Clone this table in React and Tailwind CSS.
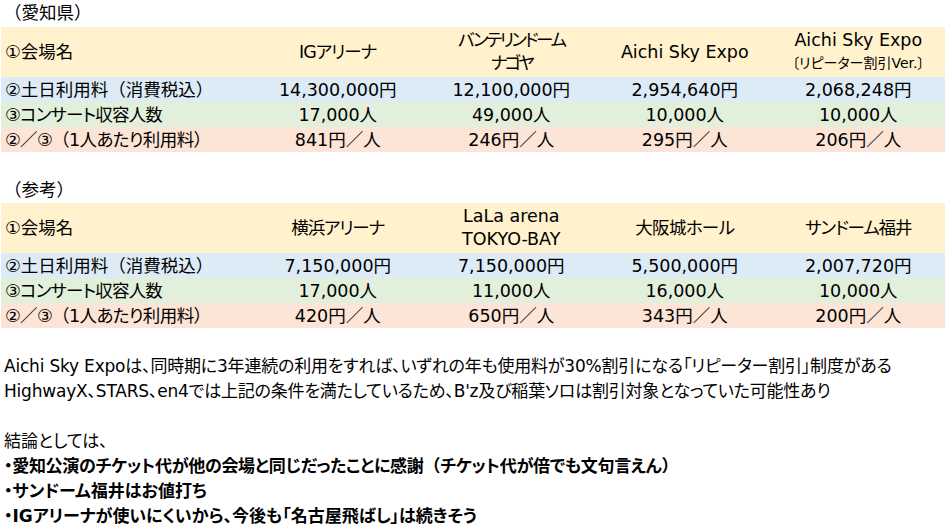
import React from "react";

const font = { fontFamily: '"DejaVu Sans", "Noto Sans CJK JP", sans-serif' };

// full-width brackets keep their full width, the rest uses proportional kana
const W = ({ children }) =>
  children.split(/([（）])/).map((s, i) =>
    s === "（" || s === "）" ? (
      <span key={i} className="[font-feature-settings:normal]">
        {s}
      </span>
    ) : (
      s
    )
  );

const tables = [
  {
    title: "（愛知県）",
    venues: [
      [["IGアリーナ", "tracking-[-1px]"]],
      [
        ["バンテリンドーム", "tracking-[-2.4px]"],
        ["ナゴヤ", "tracking-[-3px]"],
      ],
      [["Aichi Sky Expo", ""]],
      [
        ["Aichi Sky Expo", ""],
        ["〔リピーター割引Ver.〕", "text-[14px]"],
      ],
    ],
    fee: ["14,300,000円", "12,100,000円", "2,954,640円", "2,068,248円"],
    cap: ["17,000人", "49,000人", "10,000人", "10,000人"],
    per: ["841円／人", "246円／人", "295円／人", "206円／人"],
  },
  {
    title: "（参考）",
    venues: [
      [["横浜アリーナ", "tracking-[-1.1px]"]],
      [
        ["LaLa arena", ""],
        ["TOKYO-BAY", ""],
      ],
      [["大阪城ホール", "tracking-[-0.7px]"]],
      [["サンドーム福井", "tracking-[-1.1px]"]],
    ],
    fee: ["7,150,000円", "7,150,000円", "5,500,000円", "2,007,720円"],
    cap: ["17,000人", "11,000人", "16,000人", "10,000人"],
    per: ["420円／人", "650円／人", "343円／人", "200円／人"],
  },
];

const Row = ({ label, labelCls = "", cells, bg }) => (
  <div className={`grid grid-cols-[250px_repeat(4,1fr)] h-[25px] items-center ${bg}`}>
    <div className={`pl-[4px] whitespace-nowrap ${labelCls}`}>
      <W>{label}</W>
    </div>
    {cells.map((c, i) => (
      <div key={i} className="text-center whitespace-nowrap">
        {c}
      </div>
    ))}
  </div>
);

const Table = ({ t }) => (
  <div className="ml-px w-[944px]">
    <div className="grid grid-cols-[250px_repeat(4,1fr)] h-[50px] items-center bg-[#fff2cc]">
      <div className="pl-[4px]">①会場名</div>
      {t.venues.map((v, i) => (
        <div key={i} className="flex flex-col items-center leading-[23px] whitespace-nowrap">
          {v.map(([text, cls], j) => (
            <span key={j} className={cls}>
              {text}
            </span>
          ))}
        </div>
      ))}
    </div>
    <Row label="②土日利用料（消費税込）" cells={t.fee} bg="bg-[#ddebf7]" />
    <Row label="③コンサート収容人数" labelCls="tracking-[-0.8px]" cells={t.cap} bg="bg-[#e2efda]" />
    <Row label="②／③（1人あたり利用料）" labelCls="tracking-[-0.6px]" cells={t.per} bg="bg-[#fce4d6]" />
  </div>
);

export default function App() {
  return (
    <div
      className="w-[947px] h-[530px] bg-white text-black text-[17.5px] [font-feature-settings:'palt'] overflow-hidden"
      style={font}
    >
      <div className="h-[27px] flex items-center pl-[4px]">
        <W>{tables[0].title}</W>
      </div>
      <Table t={tables[0]} />
      <div className="h-[25px]" />
      <div className="h-[26px] flex items-center pl-[4px]">
        <W>{tables[1].title}</W>
      </div>
      <Table t={tables[1]} />

      <div className="pt-[26px] pl-[4px] text-[17px] leading-[25px] whitespace-nowrap">
        <p className="tracking-[-0.2px]">
          Aichi Sky Expoは、同時期に3年連続の利用をすれば、いずれの年も使用料が30%割引になる「リピーター割引」制度がある
        </p>
        <p className="tracking-[-0.2px]">
          HighwayX、STARS、en4では上記の条件を満たしているため、B'z及び稲葉ソロは割引対象となっていた可能性あり
        </p>
        <p className="h-[25px]" />
        <p>結論としては、</p>
        <p className="font-bold tracking-[-0.3px]">
          <W>・愛知公演のチケット代が他の会場と同じだったことに感謝（チケット代が倍でも文句言えん）</W>
        </p>
        <p className="font-bold">・サンドーム福井はお値打ち</p>
        <p className="font-bold">・IGアリーナが使いにくいから、今後も「名古屋飛ばし」は続きそう</p>
      </div>
    </div>
  );
}
